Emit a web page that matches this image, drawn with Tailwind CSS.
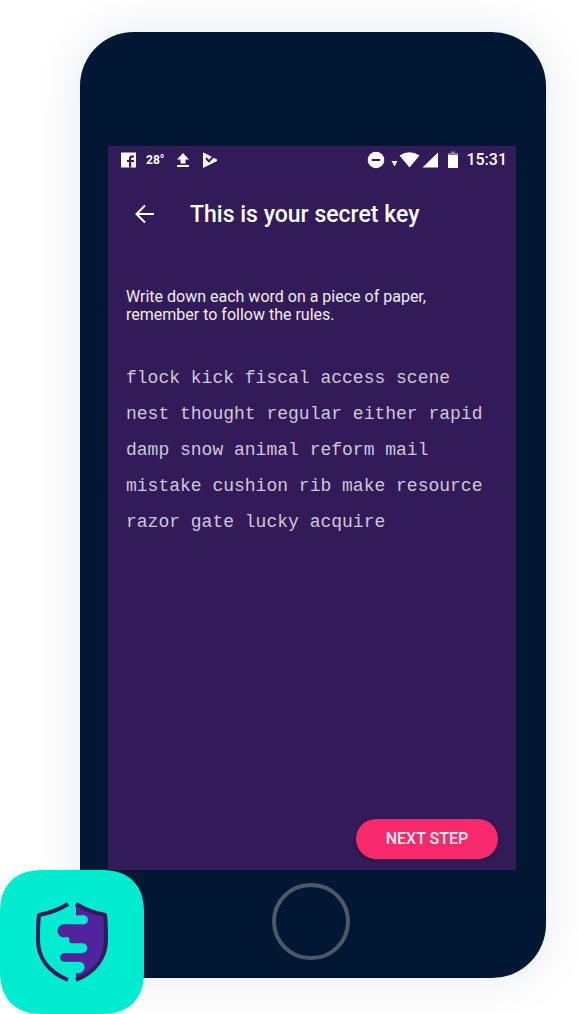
<!DOCTYPE html>
<html lang="en">
<head>
<meta charset="utf-8">
<meta name="viewport" content="width=device-width, initial-scale=1">
<title>Secret key</title>
<script src="https://cdn.jsdelivr.net/npm/@tailwindcss/browser@4"></script>
</head>
<body class="bg-white font-['Roboto',sans-serif] text-white">
<main class="relative min-h-screen pt-8 pr-8 pb-9 pl-20">
  <div class="rounded-[54px] bg-[#001833] pt-[114px] pr-[30px] pl-7 shadow-[0_0_50px_rgba(0,40,90,0.10)]">
    <section class="flex min-h-[724px] flex-col bg-[#321b58]">
      <div class="flex h-7 items-center justify-between pr-[9px] pl-3">
        <div class="flex items-center">
          <svg class="h-4 w-4" viewBox="0 0 16 16" aria-hidden="true"><path fill="#fff" d="M1 .5h15v15H1z"/><path fill="#321b58" d="M9 15.500V10H7V8h2V6.500Q9 3.500 12 3.500h2v2h-1.500q-1.300 0-1.300 1.200V8H14v2h-2.800v5.500z"/></svg>
          <span class="ml-[10px] text-[12px] font-bold">28°</span>
          <svg class="ml-3 h-4 w-[14px]" viewBox="0 0 14 16" aria-hidden="true"><path fill="#fff" d="M7 1l6 6.500H9.500v4h-5v-4H1zM1 13h12v2H1z"/></svg>
          <svg class="ml-3 h-4 w-4" viewBox="0 0 16 16" aria-hidden="true"><path fill="#fff" d="M1 1Q1 0 2 .7L15 7.500V9L2 15.400Q1 16 1 15z"/><path fill="none" stroke="#321b58" stroke-width="2" d="M4 6L7 9.300 13 3"/></svg>
        </div>
        <div class="flex items-center">
          <svg class="h-[18px] w-[18px]" viewBox="0 0 18 18" aria-hidden="true"><circle cx="9" cy="9" r="8.300" fill="#fff"/><path stroke="#321b58" stroke-width="2" stroke-linecap="round" d="M5.500 9h7"/></svg>
          <svg class="ml-1 h-[18px] w-[50px]" viewBox="0 0 50 18" aria-hidden="true"><path fill="#fff" d="M2.500 10h6l-3 5.500zM10.500 4.500Q20.500-2 30.500 4.500L20.500 16.500zM49 1.500v15H33.500z"/></svg>
          <svg class="ml-[9px] h-[18px] w-[10px]" viewBox="0 0 10 18" aria-hidden="true"><path fill="#fff" d="M0 4h10v13H0z"/><path fill="#8a7ba2" d="M3 .5h4V2h3v2H0V2h3z"/></svg>
          <time class="ml-2 text-[16px] font-medium">15:31</time>
        </div>
      </div>
      <header class="flex h-20 items-center pl-[26px]">
        <button type="button" aria-label="Back" class="h-[22px] w-[22px]"><svg viewBox="0 0 22 22" fill="none" stroke="#fff" stroke-width="2" aria-hidden="true"><path d="M20 11H3M11 2.500L2.500 11l8.500 8.500"/></svg></button>
        <h1 class="ml-[34px] pt-[2px] text-[23px] font-medium">This is your secret key</h1>
      </header>
      <p class="mt-[34px] pr-12 pl-[18px] text-[16px] leading-[18px] text-[#efedf2]">Write down each word on a piece of paper, remember to follow the rules.</p>
      <p class="mt-9 pr-4 pl-[18px] font-['Liberation_Mono',monospace] text-[18px] leading-9 text-[#cfc8d8]">flock kick fiscal access scene<br>nest thought regular either rapid<br>damp snow animal reform mail<br>mistake cushion rib make resource<br>razor gate lucky acquire</p>
      <button type="button" class="mt-auto mr-[18px] mb-[11px] h-10 w-[142px] self-end rounded-full bg-[#f8296d] text-[16px] font-medium text-[#feeaf1] shadow-[0_1px_3px_rgba(0,0,0,0.5)]">NEXT STEP</button>
    </section>
    <div class="flex h-[108px] justify-center pt-[13px] pr-[2px]">
      <button type="button" aria-label="Home" class="h-[77px] w-[78px] rounded-full border-4 border-[#4e5966]"></button>
    </div>
  </div>
  <svg class="absolute bottom-0 left-0 h-36 w-36" viewBox="0 0 144 144" role="img" aria-label="Shield logo">
    <path fill="#00ebcf" d="M0 42C0 15 15 0 42 0H102C129 0 144 15 144 42V102C144 129 129 144 102 144H42C15 144 0 129 0 102z"/>
    <path fill="#51249f" d="M76 33Q88 42 106 45V70C106 88 96 101 76 110V103H79A5.650 5.650 0 0 0 79 91.700H64.500A4.350 4.350 0 0 1 64.500 83H82.500A4.850 4.850 0 0 0 82.500 73.300H72Q69 73.300 69 70V67.300H64A6.500 6.500 0 0 1 64 54.300H83.500A4.500 4.500 0 0 0 83.500 45.300H76z"/>
    <g fill="none" stroke="#321b58" stroke-width="4" stroke-linejoin="round">
      <path d="M68 34Q55 42 39 45Q38 52 38 70C38 88 49 102 68 110"/>
      <path d="M76 34Q89 42 105 45Q106 52 106 70C106 88 95 102 76 110"/>
    </g>
  </svg>
</main>
</body>
</html>
